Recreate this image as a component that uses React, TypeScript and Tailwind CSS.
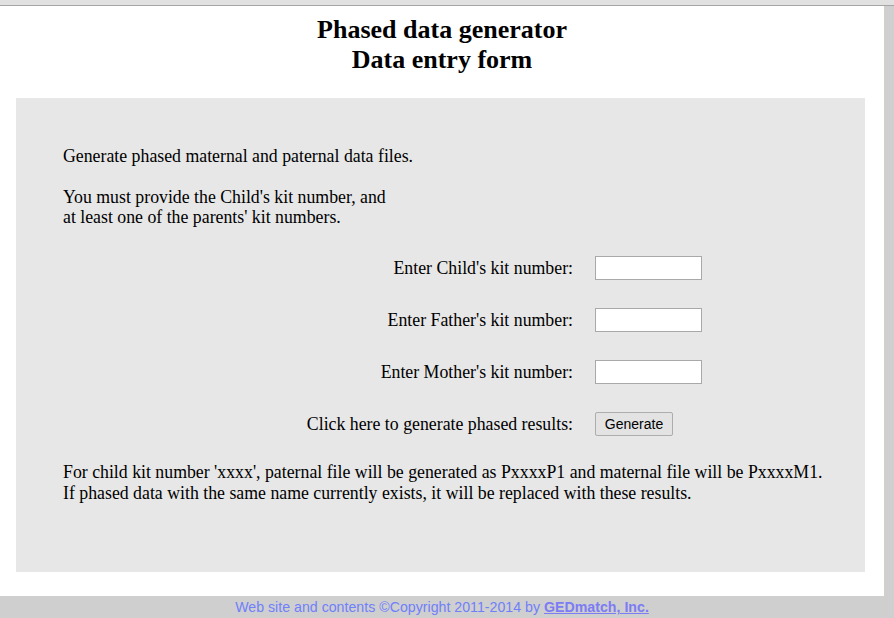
import React from "react";

const rows = [
  { label: "Enter Child's kit number:", name: "child" },
  { label: "Enter Father's kit number:", name: "father" },
  { label: "Enter Mother's kit number:", name: "mother" },
];

function App() {
  return (
    <div className="w-[894px] h-[618px] bg-[#cfcfcf] overflow-hidden">
      <div className="h-[6px] bg-[#e1e1e1] border-b border-[#a5a5a5]" />
      <div className="w-[884px]">
        <div className="h-[590px] bg-white pt-[9px] font-['Liberation_Serif',serif] text-black">
          <h1 className="text-center text-[26px] leading-[30px] font-bold">
            Phased data generator
            <br />
            Data entry form
          </h1>

          {/* grey form panel */}
          <div className="ml-4 mt-[23px] w-[849px] h-[474px] bg-[#e7e7e7] pt-[48px] pl-[47px] text-[17.8px] leading-[20px]">
            <p>Generate phased maternal and paternal data files.</p>
            <p className="mt-[21px]">
              You must provide the Child's kit number, and
              <br />
              at least one of the parents' kit numbers.
            </p>

            <div className="mt-[29px] grid grid-cols-[510px_auto] gap-x-[22px] gap-y-[28px] items-center">
              {rows.map((r) => (
                <React.Fragment key={r.name}>
                  <label htmlFor={r.name} className="text-right">
                    {r.label}
                  </label>
                  <input
                    id={r.name}
                    type="text"
                    className="w-[107px] h-[24px] bg-white border border-[#a9a9a9] outline-none"
                  />
                </React.Fragment>
              ))}
              <span className="text-right">Click here to generate phased results:</span>
              <div>
                <button className="h-[24px] w-[78px] bg-[#e3e3e3] border border-[#adadad] rounded-[2px] font-['Liberation_Sans',sans-serif] text-[14px] text-black leading-none">
                  Generate
                </button>
              </div>
            </div>

            <p className="mt-[26px] leading-[21px]">
              For child kit number 'xxxx', paternal file will be generated as PxxxxP1 and maternal file will be PxxxxM1.
              <br />
              If phased data with the same name currently exists, it will be replaced with these results.
            </p>
          </div>
        </div>

        <div className="h-[22px] pt-[2px] flex items-center justify-center font-['Liberation_Sans',sans-serif] text-[14.2px] text-[#7080fa]">
          Web site and contents ©Copyright 2011-2014 by&nbsp;
          <a href="#" className="font-bold underline text-[#7c7cf4]">
            GEDmatch, Inc.
          </a>
        </div>
      </div>
    </div>
  );
}

export default App;
